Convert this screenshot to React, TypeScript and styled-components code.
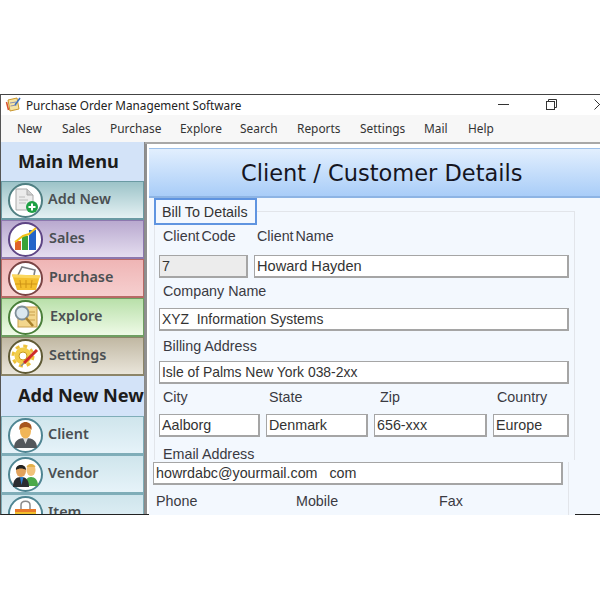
import React from 'react'
import styled, { createGlobalStyle } from 'styled-components'

const Global = createGlobalStyle`
  html, body { margin: 0; padding: 0; background: #fff; }
  body { width: 600px; height: 600px; overflow: hidden; }
`

const Page = styled.div`
  width: 600px;
  height: 600px;
  padding-top: 94px;
  box-sizing: border-box;
  background: #fff;
`

const Window = styled.div`
  width: 600px;
  height: 421px;
  box-sizing: border-box;
  border-top: 1px solid #444;
  border-left: 1px solid #555;
  border-bottom: 1px solid #222;
  background: #fff;
  display: flex;
  flex-direction: column;
`

const TitleBar = styled.div`
  height: 20px;
  flex: none;
  display: flex;
  align-items: center;
  padding: 0 0 1px 4px;
  box-sizing: border-box;
  font: 11.75px "Noto Sans", sans-serif;
  color: #222;
  overflow: hidden;
`

const TitleText = styled.span`
  margin-left: 4px;
  flex: 1;
  white-space: nowrap;
`

const WinButtons = styled.div`
  display: flex;
  align-items: center;
  gap: 37px;
  margin-right: -5px;
  svg { display: block; flex: none; }
`

const MenuBar = styled.div`
  height: 27px;
  flex: none;
  background: #f7f7f7;
  border-bottom: 2px solid #a8a8a8;
  box-sizing: content-box;
  display: flex;
  align-items: center;
  padding-left: 16px;
  font: 11.9px "Noto Sans", sans-serif;
  color: #333;
`

const MenuItem = styled.span<{ $w: number }>`
  width: ${p => p.$w}px;
  flex: none;
  margin-bottom: 2px;
`

const Body = styled.div`
  flex: 1;
  display: flex;
  min-height: 0;
`

const Sidebar = styled.div`
  width: 144px;
  flex: none;
  overflow: hidden;
  display: flex;
  flex-direction: column;
  border-right: 1px solid #8a8a8a;
  box-sizing: border-box;
  margin-top: -2px;
`

const SideHeader = styled.div<{ $h: number }>`
  height: ${p => p.$h}px;
  flex: none;
  box-sizing: border-box;
  background: #d3e3f8;
  display: flex;
  align-items: center;
  padding: 0 0 2px 17px;
  font: bold 18.2px "Noto Sans", sans-serif;
  color: #1c1c1c;
  white-space: nowrap;
  letter-spacing: -0.1px;
`

const SideItem = styled.div<{ $top: string; $bottom: string; $line: string }>`
  height: 39px;
  flex: none;
  box-sizing: border-box;
  display: flex;
  align-items: center;
  padding-left: 6px;
  border: 1px solid ${p => p.$line};
  border-width: 1px 1px 2px 1px;
  background: linear-gradient(${p => p.$top}, ${p => p.$bottom});
`

const SideLabel = styled.span<{ $gap: number }>`
  margin: 0 0 3px ${p => p.$gap}px;
  font: 600 14.4px "Noto Sans", sans-serif;
  color: #4a4f52;
`

const Coin = styled.div<{ $ring: string }>`
  width: 35px;
  height: 35px;
  flex: none;
  box-sizing: border-box;
  border-radius: 50%;
  background: #fff;
  border: 2px solid ${p => p.$ring};
  display: flex;
  align-items: center;
  justify-content: center;
  svg { display: block; flex: none; }
`

const Divider = styled.div`
  width: 4px;
  flex: none;
  box-sizing: border-box;
  background: #fff;
  border-left: 2px solid #8f8f8f;
`

const Main = styled.div`
  flex: 1;
  min-width: 0;
  display: flex;
  flex-direction: column;
  overflow: hidden;
  margin-bottom: -1px;
  border-top: 4px solid #fff;
`

const Heading = styled.div`
  height: 50px;
  flex: none;
  box-sizing: border-box;
  background: linear-gradient(#e2effe, #a9cdf8);
  border-top: 1px solid #9cc0ea;
  border-bottom: 2px solid #8db4e4;
  display: flex;
  align-items: center;
  font: 22.5px "DejaVu Sans", sans-serif;
  color: #15151f;
  padding-left: 92px;
  white-space: nowrap;
`

const FormRow = styled.div`
  flex: 1;
  display: flex;
  min-height: 0;
`

const FormArea = styled.div`
  width: 426px;
  flex: none;
  background: #f3f8fe;
  padding: 13px 0 0 4px;
  box-sizing: border-box;
  font: 14.3px "Liberation Sans", sans-serif;
  color: #3a3a42;
`

const Filler = styled.div`
  flex: 1;
  background: #f3f8fe;
  margin-bottom: 1px;
`

const GroupBox = styled.div`
  width: 421px;
  height: 249px;
  margin-left: 1px;
  box-sizing: border-box;
  border: 1px solid #e2e5ea;
  border-bottom: none;
  padding-left: 4px;
`

const Legend = styled.div`
  width: 103px;
  height: 27px;
  box-sizing: border-box;
  margin: -14px 0 0 -5px;
  border: 2px solid #5f94e0;
  background: #f3f8fe;
  display: flex;
  align-items: center;
  padding-left: 6px;
  color: #333;
`

const Row = styled.div<{ $mt?: number; $gap?: number }>`
  display: flex;
  align-items: center;
  margin-top: ${p => p.$mt ?? 0}px;
  gap: ${p => p.$gap ?? 6}px;
`

const Label = styled.div<{ $w?: number; $tight?: boolean }>`
  width: ${p => (p.$w ? p.$w + 'px' : 'auto')};
  flex: none;
  height: 17px;
  line-height: 17px;
  padding-left: 4px;
  box-sizing: border-box;
  white-space: pre;
  word-spacing: ${p => (p.$tight ? '-2px' : '0')};
`

const Input = styled.div<{ $w: number; $off?: boolean; $fs?: number }>`
  width: ${p => p.$w}px;
  height: 23px;
  flex: none;
  box-sizing: border-box;
  border: 1px solid #a5a5a5;
  border-width: 1px 2px 2px 1px;
  background: ${p => (p.$off ? '#ececec' : '#fff')};
  font-size: ${p => p.$fs ?? 14.3}px;
  line-height: 21px;
  padding-left: 2px;
  color: #333;
  white-space: pre;
  overflow: hidden;
`

const LowerPanel = styled.div`
  width: 416px;
  height: 60px;
  margin-top: 2px;
  box-sizing: border-box;
  border-right: 1px solid #e2e5ea;
`

const PhoneRow = styled.div`
  margin-top: 8px;
  display: flex;
  padding-left: 3px;
`

const PhoneLabel = styled.div<{ $w: number }>`
  width: ${p => p.$w}px;
  flex: none;
  line-height: 17px;
`

const DocIcon = () => (
  <svg width="27" height="27" viewBox="0 0 27 27">
    <path d="M4 2h11l6 6v15H4z" fill="#ececec" stroke="#aaa" />
    <path d="M15 2v6h6" fill="#d0d0d0" stroke="#aaa" />
    <path d="M7 10h6M7 13h9M7 16h7" stroke="#bbb" strokeWidth="1.2" />
    <circle cx="20" cy="20" r="6" fill="#1fa045" />
    <path d="M20 16.5v7M16.5 20h7" stroke="#fff" strokeWidth="2" />
  </svg>
)

const ChartIcon = () => (
  <svg width="27" height="27" viewBox="0 0 27 27">
    <rect x="3" y="15" width="6" height="9" fill="#e0632a" />
    <rect x="10" y="10" width="6" height="14" fill="#3aa33a" />
    <rect x="17" y="4" width="7" height="20" fill="#2465c8" />
    <path d="M3 16L11 10L17 8L24 2" stroke="#f2c21c" strokeWidth="2" fill="none" />
  </svg>
)

const BasketIcon = () => (
  <svg width="30" height="27" viewBox="0 0 30 27">
    <path d="M7 10L11 2L24 5L23 10" fill="none" stroke="#7c7f83" strokeWidth="1.6" />
    <path d="M1 9.5L29 10.5L25 25H6z" fill="#f4bf2d" />
    <path d="M1 9.5L29 10.5L28.2 13.500L2 12.5z" fill="#fbd75e" />
    <path d="M9 15l1 8M15 15v8M21 15l-1 8M4 19h22" stroke="#cf9416" />
  </svg>
)

const ExploreIcon = () => (
  <svg width="28" height="28" viewBox="0 0 28 28">
    <rect x="6" y="4" width="19" height="20" fill="#f3d68c" stroke="#c9a04e" />
    <path d="M16 9h7M17 12h6M15 17h8" stroke="#c9a04e" />
    <circle cx="10" cy="10" r="6.5" fill="#dbe7ef" stroke="#7f8f99" strokeWidth="1.8" />
    <path d="M14 15l7 8" stroke="#a8802c" strokeWidth="2.6" />
  </svg>
)

const GearIcon = () => (
  <svg width="30" height="28" viewBox="0 0 30 28">
    <circle cx="12" cy="14" r="8.5" fill="#f2cd4a" />
    <circle cx="12" cy="14" r="10" fill="none" stroke="#eec23a" strokeWidth="3" strokeDasharray="4 3.85" />
    <circle cx="12" cy="14" r="4" fill="#fff" stroke="#c99a1c" />
    <path d="M13 21L26 8" stroke="#cf2a2a" strokeWidth="3" />
    <path d="M13 21l-3 3" stroke="#888" strokeWidth="1.5" />
  </svg>
)

const ClientIcon = () => (
  <svg width="29" height="30" viewBox="0 0 29 30">
    <path d="M3 28c0-7 4-10 11.5-10S26 21 26 28z" fill="#54585c" />
    <path d="M12 18l2.5 6 2.5-6z" fill="#ddd" />
    <ellipse cx="14.5" cy="11" rx="5.5" ry="7.5" fill="#f0b558" />
    <path d="M8.5 10c-1-6 3-8 6-8s7 2 6 8c-2-4-9-4-12 0z" fill="#a8561e" />
  </svg>
)

const VendorIcon = () => (
  <svg width="29" height="30" viewBox="0 0 29 30">
    <path d="M14 27c0-6 2-9 6-9s7 3 7 9z" fill="#4aa84a" />
    <ellipse cx="20" cy="11" rx="4.5" ry="6" fill="#f1c27a" />
    <path d="M15.5 8c1-4 8-4 9 0z" fill="#e2b04a" />
    <path d="M2 28c0-7 3-10 8-10s8 3 8 10z" fill="#2b2d31" />
    <path d="M9 18l1.5 8 2-8z" fill="#2f7ed0" />
    <ellipse cx="10" cy="12" rx="5" ry="6" fill="#e2a25c" />
    <path d="M5 11c-1-6 10-7 10 0-3-2-7-2-10 0z" fill="#222" />
  </svg>
)

const BagIcon = () => (
  <svg width="27" height="29" viewBox="0 0 27 29">
    <path d="M9 10V6c0-5 9-5 9 0v4" fill="none" stroke="#8a8a8a" strokeWidth="1.5" />
    <rect x="3" y="10" width="21" height="18" fill="#f2c02e" />
    <rect x="3" y="10" width="21" height="3" fill="#e8792a" />
  </svg>
)

const AppIcon = () => (
  <svg width="17" height="17" viewBox="0 0 17 17">
    <path d="M3 4l9-2 2 11-9 2z" fill="#f6e3a2" stroke="#c9962c" />
    <path d="M5 7l6-1M5.5 10l6-1" stroke="#8a8fb0" />
    <path d="M10 9l5-7" stroke="#3a6fc0" strokeWidth="1.5" />
    <path d="M1.5 6l2 8" stroke="#d9532a" strokeWidth="1.5" />
  </svg>
)

const WinControls = () => (
  <WinButtons>
    <svg width="11" height="11" viewBox="0 0 11 11"><path d="M0 5.5h11" stroke="#333" /></svg>
    <svg width="11" height="11" viewBox="0 0 11 11" fill="none" stroke="#333">
      <rect x=".5" y="2.5" width="8" height="8" fill="#fff" />
      <path d="M2.5 2.5V.5h8v8h-2" />
    </svg>
    <svg width="11" height="11" viewBox="0 0 11 11" fill="none" stroke="#333"><path d="M.5.5l10 10M10.5.5l-10 10" /></svg>
  </WinButtons>
)

const menu: [string, number][] = [
  ['New', 45], ['Sales', 48], ['Purchase', 70], ['Explore', 60], ['Search', 57],
  ['Reports', 63], ['Settings', 64], ['Mail', 44], ['Help', 40],
]

const mainItems = [
  { name: 'Add New', top: '#9cc3c8', bottom: '#e4f1f3', line: '#6a9aa3', ring: '#4f7f82', gap: 5, icon: <DocIcon /> },
  { name: 'Sales', top: '#b9a9cf', bottom: '#e4ddef', line: '#8d78ae', ring: '#5e4585', gap: 6, icon: <ChartIcon /> },
  { name: 'Purchase', top: '#efb5b5', bottom: '#f6cfcf', line: '#b86a66', ring: '#7a4444', gap: 6, icon: <BasketIcon /> },
  { name: 'Explore', top: '#b9e0aa', bottom: '#eefae6', line: '#6f9f62', ring: '#4a7f3a', gap: 7, icon: <ExploreIcon /> },
  { name: 'Settings', top: '#c1b8a3', bottom: '#e9e5da', line: '#8c8568', ring: '#5f5a35', gap: 6, icon: <GearIcon /> },
]

const addItems = [
  { name: 'Client', icon: <ClientIcon /> },
  { name: 'Vendor', icon: <VendorIcon /> },
  { name: 'Item', icon: <BagIcon /> },
]

export default function App() {
  return (
    <Page>
      <Global />
      <Window>
        <TitleBar>
          <AppIcon />
          <TitleText>Purchase Order Management Software</TitleText>
          <WinControls />
        </TitleBar>
        <MenuBar>
          {menu.map(([m, w]) => <MenuItem key={m} $w={w}>{m}</MenuItem>)}
        </MenuBar>
        <Body>
          <Sidebar>
            <SideHeader $h={39}>Main Menu</SideHeader>
            {mainItems.map(i => (
              <SideItem key={i.name} $top={i.top} $bottom={i.bottom} $line={i.line}>
                <Coin $ring={i.ring}>{i.icon}</Coin>
                <SideLabel $gap={i.gap}>{i.name}</SideLabel>
              </SideItem>
            ))}
            <SideHeader $h={40}>Add New New</SideHeader>
            {addItems.map(i => (
              <SideItem key={i.name} $top="#cfe5ec" $bottom="#e6f3f9" $line="#7fadb8">
                <Coin $ring="#4f8592">{i.icon}</Coin>
                <SideLabel $gap={5}>{i.name}</SideLabel>
              </SideItem>
            ))}
          </Sidebar>
          <Divider />
          <Main>
            <Heading>Client / Customer Details</Heading>
            <FormRow>
              <FormArea>
                <GroupBox>
                  <Legend>Bill To Details</Legend>
                  <Row $mt={3} $gap={0}>
                    <Label $w={94} $tight>Client Code</Label>
                    <Label $tight>Client Name</Label>
                  </Row>
                  <Row $mt={10}>
                    <Input $w={89} $off>7</Input>
                    <Input $w={315} $fs={14.6}>Howard Hayden</Input>
                  </Row>
                  <Row $mt={5}><Label>Company Name</Label></Row>
                  <Row $mt={8}><Input $w={410} $fs={13.9}>XYZ  Information Systems</Input></Row>
                  <Row $mt={7}><Label>Billing Address</Label></Row>
                  <Row $mt={6}><Input $w={410} $fs={13.9}>Isle of Palms New York 038-2xx</Input></Row>
                  <Row $mt={5} $gap={0}>
                    <Label $w={106}>City</Label>
                    <Label $w={111}>State</Label>
                    <Label $w={117}>Zip</Label>
                    <Label>Country</Label>
                  </Row>
                  <Row $mt={8}>
                    <Input $w={101}>Aalborg</Input>
                    <Input $w={102}>Denmark</Input>
                    <Input $w={113}>656-xxx</Input>
                    <Input $w={76}>Europe</Input>
                  </Row>
                  <Row $mt={9}><Label>Email Address</Label></Row>
                </GroupBox>
                <LowerPanel>
                  <Input $w={410}>howrdabc@yourmail.com   com</Input>
                  <PhoneRow>
                    <PhoneLabel $w={140}>Phone</PhoneLabel>
                    <PhoneLabel $w={143}>Mobile</PhoneLabel>
                    <PhoneLabel $w={60}>Fax</PhoneLabel>
                  </PhoneRow>
                </LowerPanel>
              </FormArea>
              <Filler />
            </FormRow>
          </Main>
        </Body>
      </Window>
    </Page>
  )
}
